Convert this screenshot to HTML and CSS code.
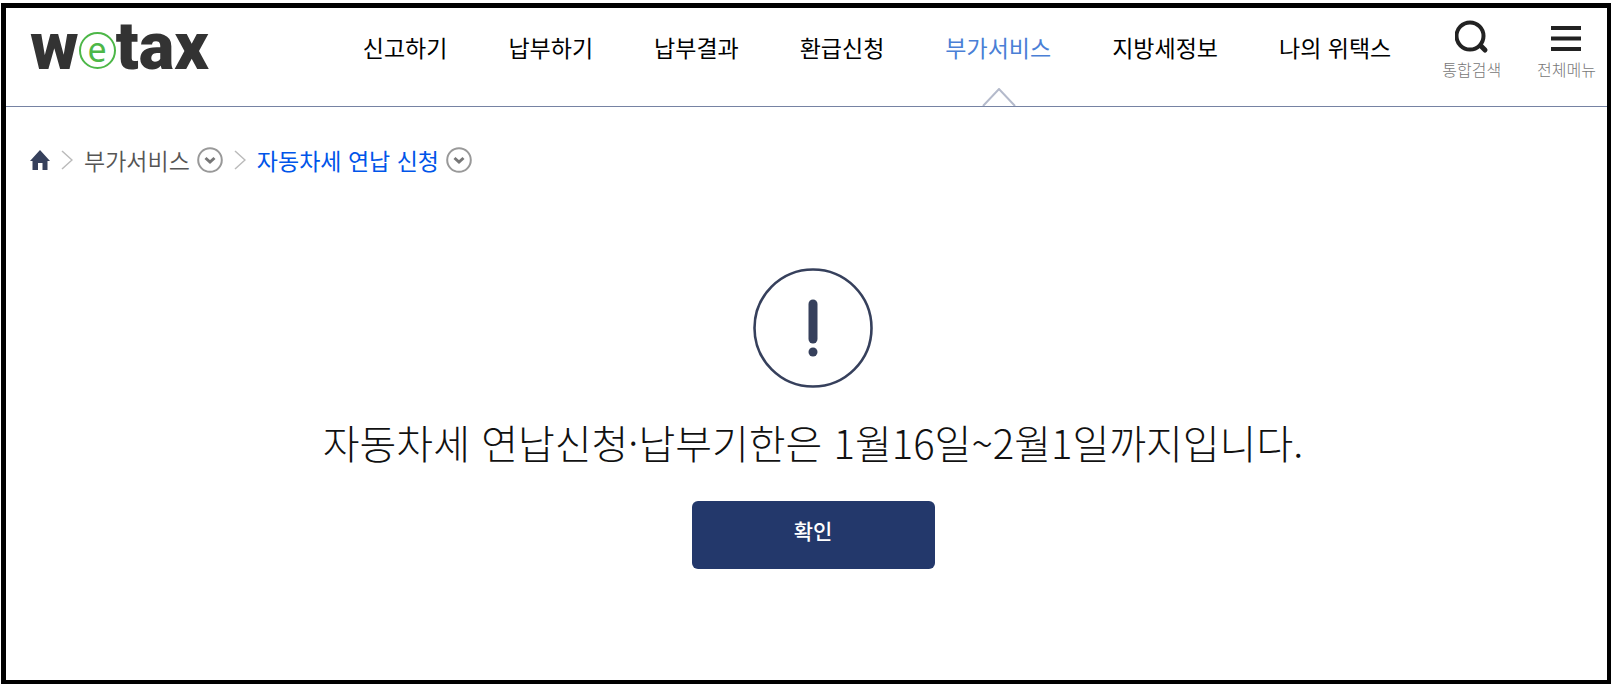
FILE: index.html
```html
<!DOCTYPE html>
<html lang="ko">
<head>
    <meta charset="UTF-8">
    <meta name="viewport" content="width=device-width, initial-scale=1.0">
    <title>자동차세 연납 신청 - wetax</title>
    <link rel="stylesheet" href="styles.css">
</head>
<body>

<div class="page">
    <header class="header">
        <a href="#" class="logo" aria-label="wetax">w<span class="logo-e">e</span>tax</a>

        <nav class="menu">
            <a href="#">신고하기</a>
            <a href="#">납부하기</a>
            <a href="#">납부결과</a>
            <a href="#">환급신청</a>
            <a href="#" class="active">부가서비스
                <svg class="menu-arrow" width="34" height="18" viewBox="0 0 34 18"><path d="M1 18 L17 1 L33 18" fill="none" stroke="#b4bacb" stroke-width="2"/></svg>
            </a>
            <a href="#">지방세정보</a>
            <a href="#">나의 위택스</a>
        </nav>

        <div class="tools">
            <button type="button" class="tool">
                <svg width="34" height="34" viewBox="0 0 34 34"><circle cx="15" cy="16" r="13.5" fill="none" stroke="#222" stroke-width="4"/><path d="M26 26 L30 30" stroke="#222" stroke-width="5" stroke-linecap="round"/></svg>
                통합검색
            </button>
            <button type="button" class="tool">
                <svg width="32" height="34" viewBox="0 0 32 34"><path d="M0 8 H30 M0 18.5 H30 M0 29 H30" stroke="#222" stroke-width="4"/></svg>
                전체메뉴
            </button>
        </div>
    </header>

    <nav class="breadcrumb">
        <a href="#" class="home" aria-label="홈">
            <svg width="20" height="20" viewBox="0 0 20 20"><path d="M10 0 L20 11 H17.500 V20 H12.500 V13 H8 V20 H2.500 V11 H0 Z" fill="#36405c"/></svg>
        </a>
        <svg width="12" height="20" viewBox="0 0 12 20"><path d="M1 1 L11 10 L1 19" fill="none" stroke="#bbb" stroke-width="1.500"/></svg>
        <div class="crumb">
            <a href="#">부가서비스</a>
            <button type="button" aria-label="부가서비스 메뉴">
                <svg width="26" height="26" viewBox="0 0 26 26"><circle cx="13" cy="13" r="11.800" fill="none" stroke="#999" stroke-width="2"/><path d="M8.500 11 L13 15 L17.500 11" fill="none" stroke="#777" stroke-width="3"/></svg>
            </button>
        </div>
        <svg width="12" height="20" viewBox="0 0 12 20"><path d="M1 1 L11 10 L1 19" fill="none" stroke="#bbb" stroke-width="1.500"/></svg>
        <div class="crumb current">
            <a href="#">자동차세 연납 신청</a>
            <button type="button" aria-label="자동차세 연납 신청 메뉴">
                <svg width="26" height="26" viewBox="0 0 26 26"><circle cx="13" cy="13" r="11.800" fill="none" stroke="#999" stroke-width="2"/><path d="M8.500 11 L13 15 L17.500 11" fill="none" stroke="#777" stroke-width="3"/></svg>
            </button>
        </div>
    </nav>

    <main class="notice">
        <svg width="120" height="120" viewBox="0 0 120 120"><circle cx="60" cy="60" r="58.500" fill="none" stroke="#36405c" stroke-width="2.600"/><path d="M60 36 V71" stroke="#36405c" stroke-width="9" stroke-linecap="round"/><circle cx="60" cy="84" r="4.500" fill="#36405c"/></svg>
        <h1>자동차세 연납신청·납부기한은 1월16일~2월1일까지입니다.</h1>
        <button type="button" class="confirm">확인</button>
    </main>
</div>

</body>
</html>
```
FILE: styles.css
```css
* {
    box-sizing: border-box;
}

body {
    margin: 0;
    padding: 3px 0 0 1px;
    background-color: white;
    font-family: "Noto Sans CJK KR", sans-serif;
}

a {
    color: inherit;
    text-decoration: none;
}

button {
    padding: 0;
    border: none;
    background: none;
    font-family: inherit;
    cursor: pointer;
}

svg {
    display: block;
}

.page {
    min-height: calc(100vh - 3px);
    border: 5px solid black;
    border-right-width: 4px;
    border-bottom-width: 4px;
}

.header {
    display: flex;
    justify-content: space-between;
    height: 99px;
    padding: 0 11px 0 24px;
    border-bottom: 1px solid #7683a3;
}

.logo {
    display: flex;
    align-items: flex-start;
    color: #333;
    font-family: Roboto, sans-serif;
    font-size: 67px;
    font-weight: 900;
    line-height: 76px;
}

.logo-e {
    width: 37px;
    height: 37px;
    margin-top: 24px;
    border: 2px solid #4db748;
    border-radius: 50%;
    color: #4db748;
    font-family: "Noto Sans", sans-serif;
    font-size: 34px;
    font-weight: 400;
    line-height: 30px;
    text-align: center;
}

.menu {
    display: flex;
    gap: 61px;
    margin-left: auto;
    color: black;
    font-size: 23px;
    font-weight: 400;
    line-height: 78px;
    white-space: nowrap;
}

.menu a {
    position: relative;
}

.menu .active {
    color: #4a7fd6;
}

.menu-arrow {
    position: absolute;
    left: 50%;
    bottom: 0;
    margin-left: -16px;
}

.tools {
    display: flex;
    gap: 36px;
    margin-left: 51px;
    padding-top: 12px;
}

.tool {
    display: flex;
    flex-direction: column;
    align-items: center;
    gap: 3px;
    color: #777;
    font-size: 16px;
    font-weight: 300;
    line-height: 24px;
    white-space: nowrap;
}

.breadcrumb {
    display: flex;
    align-items: center;
    gap: 11px;
    padding: 37px 24px 0;
    color: #555;
    font-size: 23px;
    font-weight: 350;
    line-height: 32px;
}

.crumb {
    display: flex;
    align-items: center;
    gap: 7px;
}

.current {
    color: #0055e9;
    font-weight: 400;
}

.notice {
    display: flex;
    flex-direction: column;
    align-items: center;
    padding: 92px 12px 40px 25px;
}

.notice h1 {
    margin: 24px 0 29px;
    color: #111;
    font-size: 40px;
    font-weight: 300;
    line-height: 60px;
}

.confirm {
    width: 243px;
    height: 68px;
    padding-bottom: 10px;
    border-radius: 6px;
    background-color: #23386b;
    color: white;
    font-size: 21px;
    font-weight: 500;
}
```
